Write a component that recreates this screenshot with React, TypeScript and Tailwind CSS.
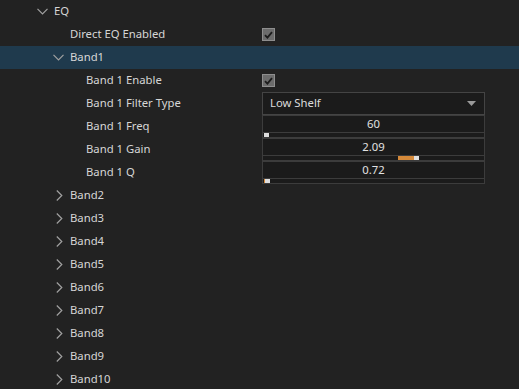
import React from 'react';

type Row =
  | { kind: 'group'; label: string; level: number; open: boolean; selected?: boolean }
  | { kind: 'check'; label: string; level: number }
  | { kind: 'select'; label: string; level: number; value: string }
  | { kind: 'number'; label: string; level: number; value: string; fill?: [number, number]; thumb: number };

const rows: Row[] = [
  { kind: 'group', label: 'EQ', level: 0, open: true },
  { kind: 'check', label: 'Direct EQ Enabled', level: 1 },
  { kind: 'group', label: 'Band1', level: 1, open: true, selected: true },
  { kind: 'check', label: 'Band 1 Enable', level: 2 },
  { kind: 'select', label: 'Band 1 Filter Type', level: 2, value: 'Low Shelf' },
  { kind: 'number', label: 'Band 1 Freq', level: 2, value: '60', thumb: 1 },
  { kind: 'number', label: 'Band 1 Gain', level: 2, value: '2.09', fill: [135, 151], thumb: 151 },
  { kind: 'number', label: 'Band 1 Q', level: 2, value: '0.72', fill: [1, 2], thumb: 2 },
  ...['Band2', 'Band3', 'Band4', 'Band5', 'Band6', 'Band7', 'Band8', 'Band9', 'Band10'].map(
    (b): Row => ({ kind: 'group', label: b, level: 1, open: false })
  ),
];

function Chevron({ open }: { open: boolean }) {
  return open ? (
    <svg width="11" height="7" viewBox="0 0 11 7" className="ml-[1px]">
      <path d="M0.5 0.8 L5.5 5.8 L10.5 0.8" fill="none" stroke="#a0a0a0" strokeWidth="1.2" />
    </svg>
  ) : (
    <svg width="7" height="11" viewBox="0 0 7 11" className="ml-[4px]">
      <path d="M0.8 0.5 L5.8 5.5 L0.8 10.5" fill="none" stroke="#a0a0a0" strokeWidth="1.2" />
    </svg>
  );
}

function Value({ row }: { row: Row }) {
  if (row.kind === 'check') {
    return (
      <div className="flex h-full items-center">
        <div className="flex h-[13px] w-[13px] items-center justify-center border border-[#8e8e8e] bg-[#6c6c6c]">
          <svg width="9" height="8" viewBox="0 0 9 8">
            <path d="M1 4.2 L3.4 6.6 L8 1.2" fill="none" stroke="#1c1c1c" strokeWidth="1.8" />
          </svg>
        </div>
      </div>
    );
  }
  if (row.kind === 'select') {
    return (
      <div className="flex h-full items-center justify-between border border-[#444444] bg-[#1b1b1b] pl-[7px] pr-[8px] text-[#dcdcdc]">
        <span>{row.value}</span>
        <svg width="9" height="5" viewBox="0 0 9 5">
          <path d="M0 0 H9 L4.5 5 Z" fill="#9a9a9a" />
        </svg>
      </div>
    );
  }
  if (row.kind === 'number') {
    return (
      <div className="flex h-full flex-col border border-[#3c3c3c] bg-[#1b1b1b]">
        <div className="flex h-[16px] items-center justify-center text-[#e2e2e2]">{row.value}</div>
        <div className="h-px bg-[#3c3c3c]" />
        <div className="relative h-[4px]">
          {row.fill ? (
            <div
              className="absolute top-0 h-full bg-[#d4893a]"
              style={{ left: row.fill[0], width: row.fill[1] - row.fill[0] }}
            />
          ) : null}
          <div className="absolute top-0 h-full w-[5px] bg-[#dedede]" style={{ left: row.thumb }} />
        </div>
      </div>
    );
  }
  return null;
}

export default function App() {
  return (
    <div
      className="h-[389px] w-[519px] overflow-hidden bg-[#222222] text-[11.3px] text-[#d6d6d6]"
      style={{ fontFamily: '"Noto Sans", "Liberation Sans", sans-serif' }}
    >
      {rows.map((row) => (
        <div
          key={row.label}
          className={`flex h-[23px] items-stretch ${row.kind === 'group' && row.selected ? 'bg-[#1f3a4d]' : ''}`}
        >
          <div className="flex w-[262px] items-center" style={{ paddingLeft: 36 + row.level * 16 }}>
            {row.kind === 'group' ? (
              <div className="flex w-[18px] items-center">
                <Chevron open={row.open} />
              </div>
            ) : (
              <div className="w-[18px]" />
            )}
            <span className="whitespace-nowrap">{row.label}</span>
          </div>
          <div className="w-[223px]">
            <Value row={row} />
          </div>
        </div>
      ))}
    </div>
  );
}
